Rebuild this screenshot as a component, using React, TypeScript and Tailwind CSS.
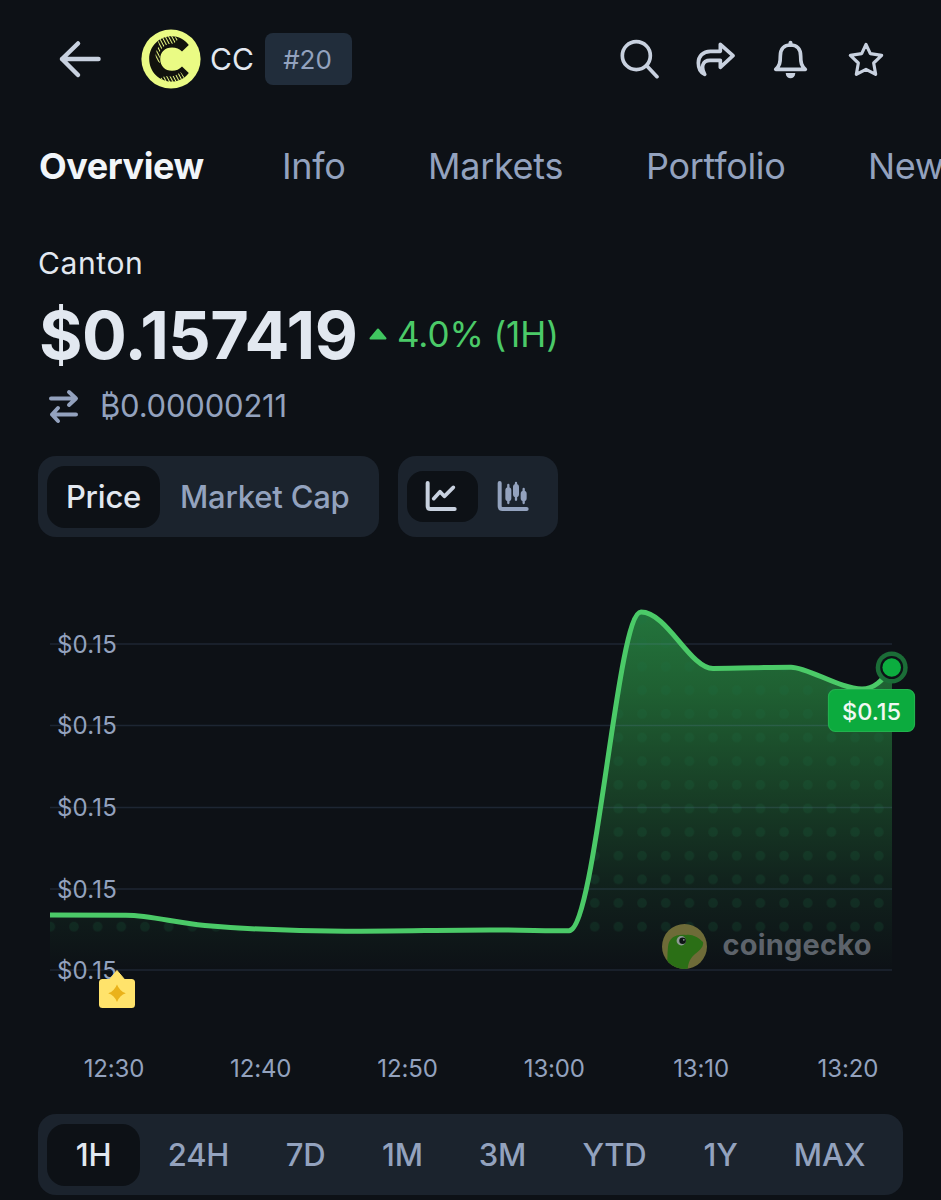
import clsx from 'clsx'

const TABS = [
  { label: 'Overview', cls: 'w-[244px] pl-px font-bold text-slate-100 tracking-[-0.45px]' },
  { label: 'Info', cls: 'w-[146px] text-[#93a2be]' },
  { label: 'Markets', cls: 'w-[218px] text-[#93a2be]' },
  { label: 'Portfolio', cls: 'w-[222px] text-[#93a2be]' },
  { label: 'New', cls: 'w-[73px] text-[#93a2be]' },
]

const RANGES = [
  { label: '1H', cls: 'w-[93px]' },
  { label: '24H', cls: 'w-[117px]' },
  { label: '7D', cls: 'w-[97px]' },
  { label: '1M', cls: 'w-[97px]' },
  { label: '3M', cls: 'w-[103px]' },
  { label: 'YTD', cls: 'w-[121px]' },
  { label: '1Y', cls: 'w-[91px]' },
  { label: 'MAX', cls: 'w-[127px]' },
]

const TIMES = ['12:30', '12:40', '12:50', '13:00', '13:10', '13:20']
const GRID = [644, 725.5, 807.5, 889, 970]

const LINE =
  'M50 915 L126 915.3 C152 915.5 175 923 205 925.5 C245 928.8 300 931.3 345 931.3 C400 931.3 445 930 490 930 C520 930 545 930.8 569 930.8 C596 928 617 612 641 612 C667 612 690 668.5 713 668.5 C740 668.5 765 667.2 791 667.2 C808 667.2 840 689 862 689 C875 689 882 680 892 668'

function CantonLogo() {
  return (
    <svg width="60" height="60" viewBox="0 0 60 60">
      <defs>
        <pattern id="hatch" width="2.9" height="8" patternUnits="userSpaceOnUse" patternTransform="rotate(-28)">
          <rect width="1" height="8" fill="#eafb84" />
        </pattern>
      </defs>
      <circle cx="30" cy="30" r="29.6" fill="#eafb84" />
      <path
        d="M47.8 16 C43.5 10.5 37.5 7.3 30.8 7.3 C18 7.3 8.2 17.4 8.2 30 C8.2 42.6 18 52.6 30.8 52.6 C37.5 52.6 43.5 49.5 47.8 44 L41 37.6 C38.5 40.4 35.2 41.8 31 41.8 C24 41.8 19.2 37 19.2 30 C19.2 23 24 18.4 31 18.4 C35.2 18.4 38.5 19.8 41 22.6 Z"
        fill="#11120d"
      />
      <path d="M17 12 C21 8 26 7 31 7 L38 9.500 L33 14.500 C24 14.500 20 19 18.500 24 L19.200 34 L15.500 32 C13.500 27 15 21 18 17 Z" fill="url(#hatch)" />
      <path d="M19 49.500 L24 47 C29 48 35 47.500 39.500 43 L43.500 48 C37 54 26 55 19 49.500 Z" fill="url(#hatch)" />
    </svg>
  )
}

function HeaderIcons() {
  return (
    <div className="flex items-center gap-[35.3px] text-[#c8d1df]">
      <svg width="40" height="40" viewBox="60 57 120 120" fill="none" stroke="currentColor" strokeWidth="11" strokeLinecap="round" strokeLinejoin="round">
        <circle cx="109" cy="107" r="42" />
        <path d="M140 137 L171 170" />
      </svg>
      <svg width="40" height="40" viewBox="285 57 120 120" fill="none" stroke="currentColor" strokeWidth="11" strokeLinecap="round" strokeLinejoin="round">
        <path d="M361 73 L399 107 L361 142 L361 121 L330 121 C306 121 303 143 314 163 C300 157 295 143 295 129 C295 109 309 94 331 94 L361 94 Z" />
        <path d="M303 150 L313 161 L304 140 Z" fill="currentColor" strokeWidth="4" />
      </svg>
      <svg width="40" height="40" viewBox="513 57 120 120" fill="none" stroke="currentColor" strokeWidth="11" strokeLinejoin="round">
        <path d="M527 148 C539 138 541 128 541 108 C541 86 553 75 571.500 75 C590 75 602 86 602 108 C602 128 604 138 616 148 Z" />
        <path d="M571.500 75 V68" strokeWidth="12" strokeLinecap="round" />
        <path d="M557 159 H586 C585 170 579 175 571.500 175 C564 175 558 170 557 159 Z" fill="currentColor" stroke="none" />
      </svg>
      <svg width="40" height="40" viewBox="738 57 120 120" fill="none" stroke="currentColor" strokeWidth="9.5" strokeLinejoin="round">
        <path d="M798 73 L811 101 L845 106 L821 129 L827 163 L798 148 L769 163 L775 129 L751 106 L785 101 Z" />
      </svg>
    </div>
  )
}

function LineIcon() {
  return (
    <svg width="32" height="30" viewBox="0 0 96 90" fill="none" stroke="currentColor" strokeWidth="12" strokeLinecap="round" strokeLinejoin="round">
      <path d="M8 6 V76 Q8 84 16 84 H89" />
      <path d="M26 53 L45 32 L58 46 L85 19" strokeWidth="11" />
    </svg>
  )
}

function CandleIcon() {
  return (
    <svg width="32" height="30" viewBox="0 0 96 90" fill="none" stroke="currentColor" strokeLinecap="round" strokeLinejoin="round">
      <path d="M8 6 V76 Q8 84 16 84 H89" strokeWidth="12" />
      <path d="M34 12 V66 M57 6 V56 M80 24 V66" strokeWidth="7" />
      <path d="M34 28 V52 M57 18 V40 M80 38 V52" strokeWidth="18" />
    </svg>
  )
}

function Chart() {
  return (
    <svg className="block" width="941" height="490" viewBox="0 560 941 490">
      <defs>
        <linearGradient id="area" x1="0" y1="612" x2="0" y2="970" gradientUnits="userSpaceOnUse">
          <stop offset="0" stopColor="#23743c" />
          <stop offset="0.22" stopColor="#1f6032" />
          <stop offset="0.5" stopColor="#183f26" />
          <stop offset="0.75" stopColor="#11231d" />
          <stop offset="1" stopColor="#0d1116" />
        </linearGradient>
        <pattern id="dots" x="38.500" y="914.9" width="23.67" height="23.64" patternUnits="userSpaceOnUse">
          <circle cx="11.8" cy="11.8" r="4.8" fill="#1a7042" fillOpacity="0.19" />
        </pattern>
        <clipPath id="gecko">
          <circle cx="684.500" cy="946.500" r="22.500" />
        </clipPath>
      </defs>

      <path d={`${LINE} V970 H50 Z`} fill="url(#area)" />
      <path d={`${LINE} V938 H50 Z`} fill="url(#dots)" />

      {GRID.map((y) => (
        <g key={y}>
          <path d={`M50 ${y} H892`} stroke="#6f8dc4" strokeOpacity="0.17" strokeWidth="1.500" />
          <text x="57" y={y + 8.8} fill="#93a2be" fontSize="24" letterSpacing="0.15">$0.15</text>
        </g>
      ))}

      {/* watermark */}
      <g clipPath="url(#gecko)">
        <rect x="660" y="922" width="50" height="50" fill="#6e6b38" />
        <path d="M666 972 C668 964 667 955 668 947 C669 938 675 934 686 935 C692 934 698 937 703 942 C704 947 699 951 695 954 C690 958 687 965 688 972 Z" fill="#2b6f16" />
        <circle cx="681.300" cy="940.700" r="4.700" fill="#8e9a94" />
        <circle cx="682.600" cy="940.700" r="3.300" fill="#0d1514" />
        <circle cx="683.800" cy="939.800" r="0.900" fill="#8e9a94" />
      </g>
      <text x="722.500" y="954.500" fill="#5d636b" fontSize="29" fontWeight="700" textLength="149" className="font-['Inter',sans-serif]">coingecko</text>

      <path d={LINE} fill="none" stroke="#4bca68" strokeWidth="5" strokeLinejoin="round" />

      <circle cx="891.700" cy="667.500" r="16" fill="#1b6d37" />
      <circle cx="891.700" cy="667.500" r="11.500" fill="#0d1217" />
      <circle cx="891.700" cy="667.500" r="9.300" fill="#0cad3f" />
      <rect x="828.500" y="689.500" width="86" height="42" rx="7" fill="#0cab3e" stroke="#22b24e" strokeWidth="1.200" />
      <text x="871.500" y="719.500" fill="#f1f8f3" fontSize="23.500" fontWeight="500" textAnchor="middle">$0.15</text>

      {/* event marker */}
      <path d="M109 980 L117 970.500 L125 980 Z" fill="#ffe36b" stroke="#ffe36b" strokeLinejoin="round" />
      <rect x="99" y="979" width="36" height="29" rx="3.500" fill="#ffe36b" />
      <path d="M117 984.500 Q119.500 991 125.800 993.300 Q119.500 995.500 117 1002 Q114.500 995.500 108.200 993.300 Q114.500 991 117 984.500 Z" fill="#eab21a" />
    </svg>
  )
}

export default function App() {
  return (
    <main className="flex h-[1200px] w-[941px] flex-col overflow-hidden bg-[#0d1116] font-['Inter',sans-serif]">
      <header className="flex h-[118px] items-center pl-[58px] pr-[55px]">
        <svg width="44" height="40" viewBox="0 0 44 40" fill="none" stroke="#c8d1df" strokeWidth="4.5" strokeLinecap="round" strokeLinejoin="round">
          <path d="M40.500 20 H4 M20 4.500 L4 20 L20 36" />
        </svg>
        <div className="ml-[39px] flex items-center">
          <CantonLogo />
          <span className="ml-[9px] w-[55px] text-[30px] text-slate-200">CC</span>
          <span className="flex h-[52px] w-[87px] items-center justify-center rounded-lg bg-[#212d3b] pr-[2px] text-[26px] text-[#93a2be]">#20</span>
        </div>
        <div className="ml-auto">
          <HeaderIcons />
        </div>
      </header>

      <nav className="flex h-[96px] w-full shrink-0 items-center pl-[38px] text-[36px] tracking-[-0.3px]">
        {TABS.map((t) => (
          <span key={t.label} className={clsx('shrink-0', t.cls)}>{t.label}</span>
        ))}
      </nav>

      <section className="flex h-[242px] shrink-0 flex-col pl-[38px]">
        <h2 className="mt-[29px] h-10 text-[30px] leading-[40px] tracking-[0.6px] text-slate-200">Canton</h2>
        <div className="mt-[11px] flex h-20 items-center">
          <span className="w-[331px] pl-px pt-px text-[66.5px] font-bold leading-[80px] tracking-[-0.5px] text-slate-200">$0.157419</span>
          <svg className="mb-px" width="18" height="12" viewBox="0 0 18 12" fill="#40c760" stroke="#40c760" strokeWidth="2" strokeLinejoin="round">
            <path d="M9 1.500 L16.500 10.500 H1.500 Z" />
          </svg>
          <span className="ml-[10px] text-[35px] tracking-[-0.1px] text-[#4bca68]">4.0% (1H)</span>
        </div>
        <div className="mt-[12px] flex h-10 items-center text-[#93a2be]">
          <svg className="mb-px ml-[10px]" width="32" height="36" viewBox="0 0 32 36" fill="none" stroke="currentColor" strokeWidth="4" strokeLinecap="round" strokeLinejoin="round">
            <path d="M3 10.500 H27 M21 4 L28 10.500 L21 17 M28 26.500 H4 M10 20 L4 26.500 L10 33" />
          </svg>
          <span className="ml-[20px] text-[31px] tracking-[-0.2px]">₿0.00000211</span>
        </div>
      </section>

      <section className="flex h-[81px] shrink-0 gap-[19px] pl-[38px] text-[31px] font-medium tracking-[-0.2px]">
        <div className="flex w-[341px] items-center rounded-[18px] bg-[#1b232d] pl-[9px]">
          <button className="h-[62px] w-[113px] rounded-[18px] bg-[#0d1116] pt-px text-slate-200">Price</button>
          <button className="ml-[20px] pt-px text-[#93a2be]">Market Cap</button>
        </div>
        <div className="flex w-[160px] items-center rounded-[18px] bg-[#1b232d] pl-[9px]">
          <button className="flex h-[51px] w-[71px] items-center justify-center rounded-[16px] bg-[#0d1116] pr-[3px] pb-[2px] text-[#c8d1df]">
            <LineIcon />
          </button>
          <button className="ml-[19px] pb-[2px] text-[#93a2be]">
            <CandleIcon />
          </button>
        </div>
      </section>

      <section className="mt-[23px] shrink-0">
        <Chart />
        <div className="flex h-9 items-center pl-[40.5px] pt-[2px] text-[24px] tracking-[-0.15px] text-[#93a2be]">
          {TIMES.map((t) => (
            <span key={t} className="w-[146.8px] text-center">{t}</span>
          ))}
        </div>
      </section>

      <div className="ml-[38px] mt-[28px] flex h-[81px] w-[865px] shrink-0 items-center rounded-[18px] bg-[#1b232d] pl-[9px] text-[31px] font-medium tracking-[-0.2px]">
        {RANGES.map((r, i) => (
          <button
            key={r.label}
            className={clsx('h-[62px] shrink-0 rounded-[18px] pt-px', r.cls, i === 0 ? 'bg-[#0d1116] text-slate-200' : 'text-[#93a2be]')}
          >
            {r.label}
          </button>
        ))}
      </div>
    </main>
  )
}
